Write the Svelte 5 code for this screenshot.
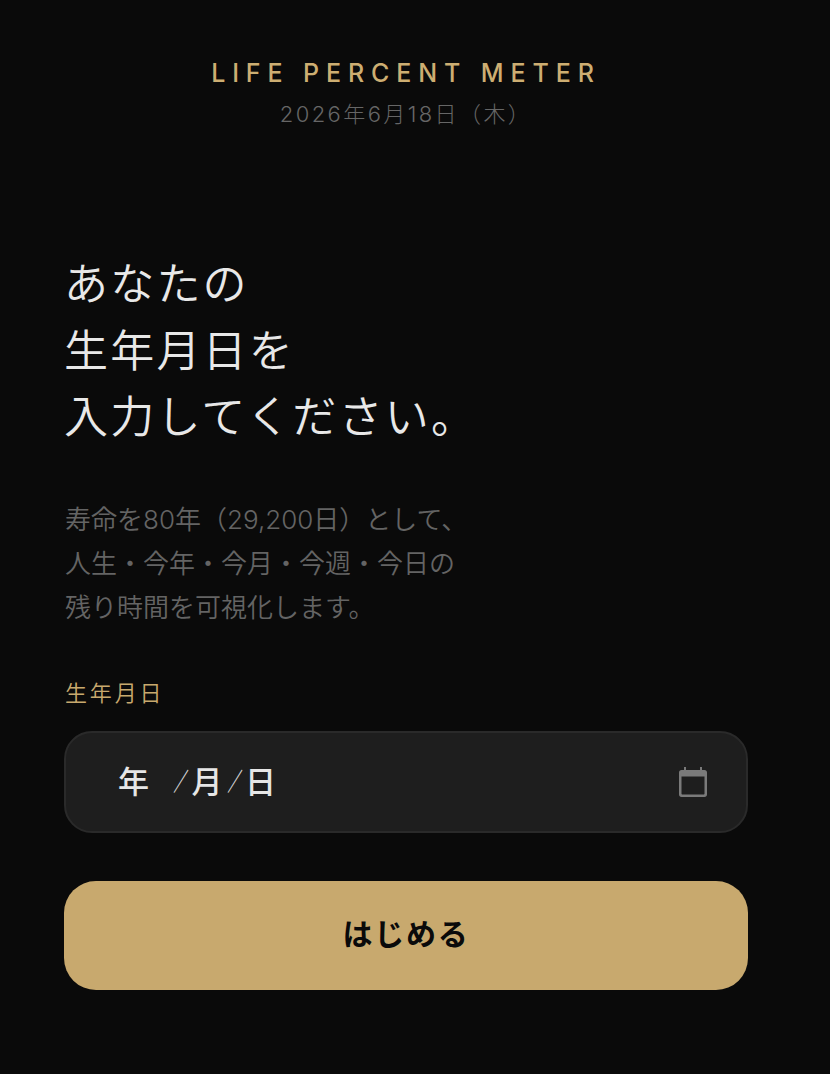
<script>
  const headingLines = ['あなたの', '生年月日を', '入力してください。'];
  const descLines = ['寿命を80年（29,200日）として、', '人生・今年・今月・今週・今日の', '残り時間を可視化します。'];
</script>

<main class="page">
  <header class="top">
    <div class="brand">LIFE PERCENT METER</div>
    <div class="date">2026年6月18日（木）</div>
  </header>

  <h1 class="heading">
    {#each headingLines as line}<span class="line">{line}</span>{/each}
  </h1>

  <p class="desc">
    {#each descLines as line}<span class="line">{line}</span>{/each}
  </p>

  <div class="label">生年月日</div>
  <div class="field">
    <div class="segments">
      <span class="seg year">年</span>
      <span class="sep">／</span>
      <span class="seg">月</span>
      <span class="sep">／</span>
      <span class="seg">日</span>
    </div>
    <svg class="cal" viewBox="0 0 28 30" width="28" height="30" aria-hidden="true">
      <path fill="#7a7a7a" fill-rule="evenodd" d="M5 0h2v3h14V0h2v3h2.500C27 3 28 4 28 5.500v22c0 1.500-1 2.500-2.500 2.500h-23C1 30 0 29 0 27.500v-22C0 4 1 3 2.500 3H5z M2.500 9.500V26.500c0 .6.400 1 1 1h21c.6 0 1-.4 1-1V9.500z"/>
    </svg>
  </div>

  <button class="start" type="button">はじめる</button>
</main>

<style>
  :global(body) {
    margin: 0;
    background: #0a0a0a;
  }
  .page {
    box-sizing: border-box;
    min-height: 1074px;
    padding: 57px 82px 0 64px;
    display: flex;
    flex-direction: column;
    background: #0a0a0a;
    font-family: Inter, "Noto Sans CJK JP", sans-serif;
  }
  .top {
    display: flex;
    flex-direction: column;
    align-items: center;
  }
  .brand {
    font-size: 25px;
    line-height: 32px;
    font-weight: 500;
    letter-spacing: 6.9px;
    color: #cdae72;
  }
  .date {
    margin-top: 9px;
    font-size: 22px;
    line-height: 32px;
    font-weight: 300;
    letter-spacing: 2.4px;
    color: #666;
  }
  .line {
    display: block;
  }
  .heading {
    margin: 121px 0 0;
    font-size: 44px;
    line-height: 66.5px;
    font-weight: 350;
    letter-spacing: 2.2px;
    color: #e8e8e8;
  }
  .desc {
    margin: 47px 0 0;
    padding-left: 1px;
    font-size: 26px;
    line-height: 44px;
    font-weight: 350;
    color: #646464;
  }
  .label {
    margin-top: 47px;
    padding-left: 1px;
    font-size: 22px;
    line-height: 32px;
    font-weight: 350;
    letter-spacing: 0.13em;
    color: #c8a96e;
  }
  .field {
    box-sizing: border-box;
    margin-top: 22px;
    height: 102px;
    padding: 0 39px 0 52px;
    display: flex;
    align-items: center;
    justify-content: space-between;
    background: #1e1e1e;
    border: 2px solid #2a2a2a;
    border-radius: 28px;
  }
  .segments {
    display: flex;
    align-items: center;
    font-size: 31px;
    line-height: 40px;
    font-weight: 500;
    color: #e6e6e6;
  }
  .year {
    margin-right: 20px;
  }
  .sep {
    box-sizing: border-box;
    width: 22.5px;
    padding-right: 5px;
    font-size: 25px;
    font-weight: 500;
    text-align: center;
    color: #e0e0e0;
    transform: scaleX(0.62);
  }
  .cal {
    display: block;
  }
  .start {
    box-sizing: border-box;
    margin-top: 48px;
    height: 109px;
    padding: 0 0 6px;
    border: 0;
    border-radius: 32px;
    background: #c8a96e;
    color: #0a0a0a;
    font-family: inherit;
    font-size: 30px;
    font-weight: 700;
    letter-spacing: 0.06em;
  }
</style>
